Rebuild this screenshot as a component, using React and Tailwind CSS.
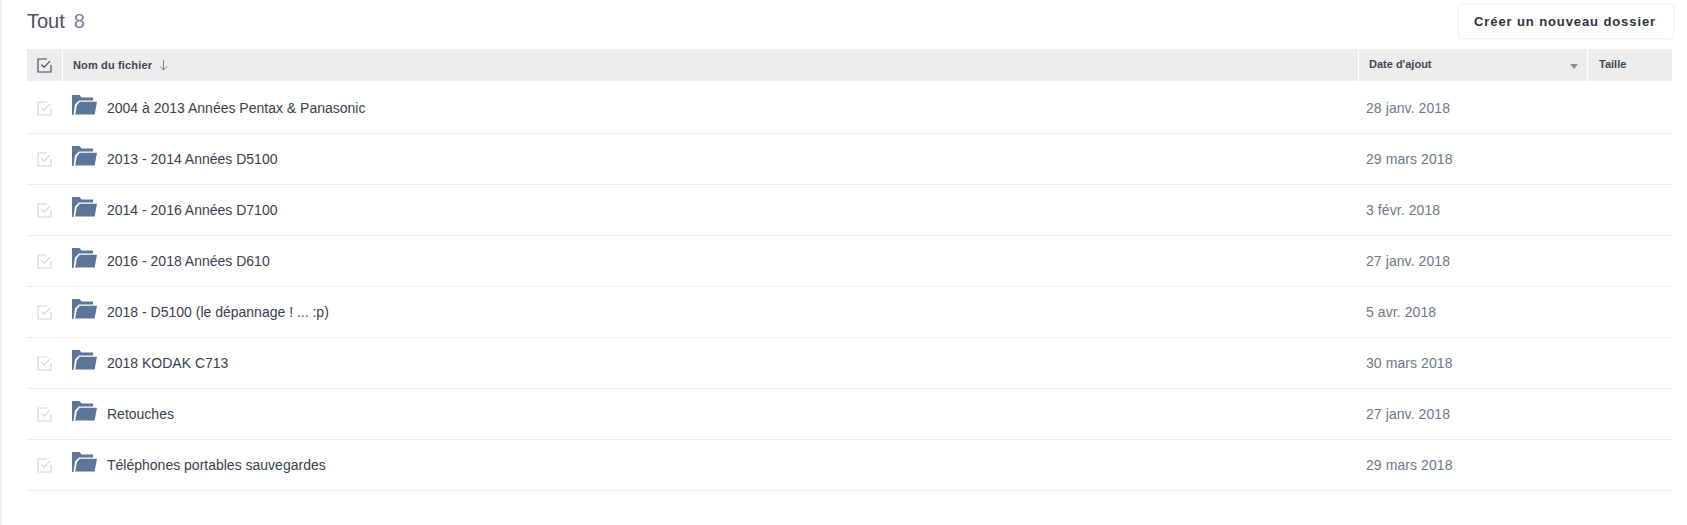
const rows = [
  ["2004 à 2013 Années Pentax & Panasonic", "28 janv. 2018"],
  ["2013 - 2014 Années D5100", "29 mars 2018"],
  ["2014 - 2016 Années D7100", "3 févr. 2018"],
  ["2016 - 2018 Années D610", "27 janv. 2018"],
  ["2018 - D5100 (le dépannage ! ... :p)", "5 avr. 2018"],
  ["2018 KODAK C713", "30 mars 2018"],
  ["Retouches", "27 janv. 2018"],
  ["Téléphones portables sauvegardes", "29 mars 2018"],
];

function Check({ className }) {
  return (
    <svg viewBox="0 0 15 15" className={className} fill="none" stroke="currentColor" strokeWidth="1.1">
      <path d="M10 1H1v13h13V7" />
      <path d="M4.5 6.5l2.6 2.6L13 3.2" />
    </svg>
  );
}

function Folder() {
  return (
    <svg viewBox="0 0 25 20" className="w-[25px] h-[20px] block">
      <path fill="#5d7599" d="M0 20V0h7.5l2 2.5h11.5v3H7L3 9.5 1.5 20z" />
      <path fill="#5d7599" d="M7.8 6.8H25L22.6 19.5H3.2L4.8 10.5z" />
    </svg>
  );
}

export default function App() {
  return (
    <div className="h-[525px] w-[1687px] bg-white overflow-hidden font-['Liberation_Sans',Arial,sans-serif] border-l-[2px] border-[#efefef]">
      <div className="ml-[25px] mr-[15px]">
        <div className="flex items-start justify-between h-[49px] pt-[5px]">
          <div className="flex items-baseline gap-[9px] text-[20px] leading-[32px] text-[#4a4f5c]">
            <span>Tout</span>
            <span className="text-[#7a8199]">8</span>
          </div>
          <button className="h-[33px] w-[214px] -mr-[1px] pr-[2px] rounded-[3px] bg-white shadow-[0_0_3px_rgba(0,0,0,0.16)] text-[13px] font-bold tracking-[0.9px] text-[#2c3340]">
            Créer un nouveau dossier
          </button>
        </div>
        <div className="flex h-[32px] gap-[1px] text-[11px] font-bold text-[#3f4553]">
          <div className="w-[35px] bg-[#ededed] flex items-center justify-center">
            <Check className="w-[15px] h-[15px] text-[#3a4250]" />
          </div>
          <div className="w-[1295px] bg-[#ededed] flex items-center pl-[10px] gap-[7px] tracking-[0.15px]">
            <span>Nom du fichier</span>
            <svg viewBox="0 0 9 12" className="w-[9px] h-[12px] text-[#777d8a]" fill="none" stroke="currentColor" strokeWidth="1">
              <path d="M4.5 1v10M1 7.5l3.5 3.5L8 7.5" />
            </svg>
          </div>
          <div className="w-[228px] bg-[#ededed] flex items-center justify-between pl-[10px] pr-[9px] pb-[1px]">
            <span>Date d'ajout</span>
            <span className="w-0 h-0 mt-[3px] border-x-[4px] border-x-transparent border-t-[5px] border-t-[#8a8f99]" />
          </div>
          <div className="flex-1 bg-[#ededed] flex items-center pl-[11px] pb-[2px]">Taille</div>
        </div>
        <div className="pt-[2px]">
          {rows.map(([name, date]) => (
            <div key={name} className="flex h-[51px] border-b border-[#ececec] text-[14px]">
              <div className="w-[36px] flex items-center justify-center -ml-[1px] mr-[1px]">
                <Check className="w-[15px] h-[15px] text-[#d4d4d4]" />
              </div>
              <div className="w-[1296px] flex items-center pl-[9px] gap-[10px] text-[#3a4050]">
                <span className="-mt-[6px]"><Folder /></span>
                <span>{name}</span>
              </div>
              <div className="flex-1 flex items-center pl-[7px] tracking-[0.08px] text-[#6e778c]">{date}</div>
            </div>
          ))}
        </div>
      </div>
    </div>
  );
}
